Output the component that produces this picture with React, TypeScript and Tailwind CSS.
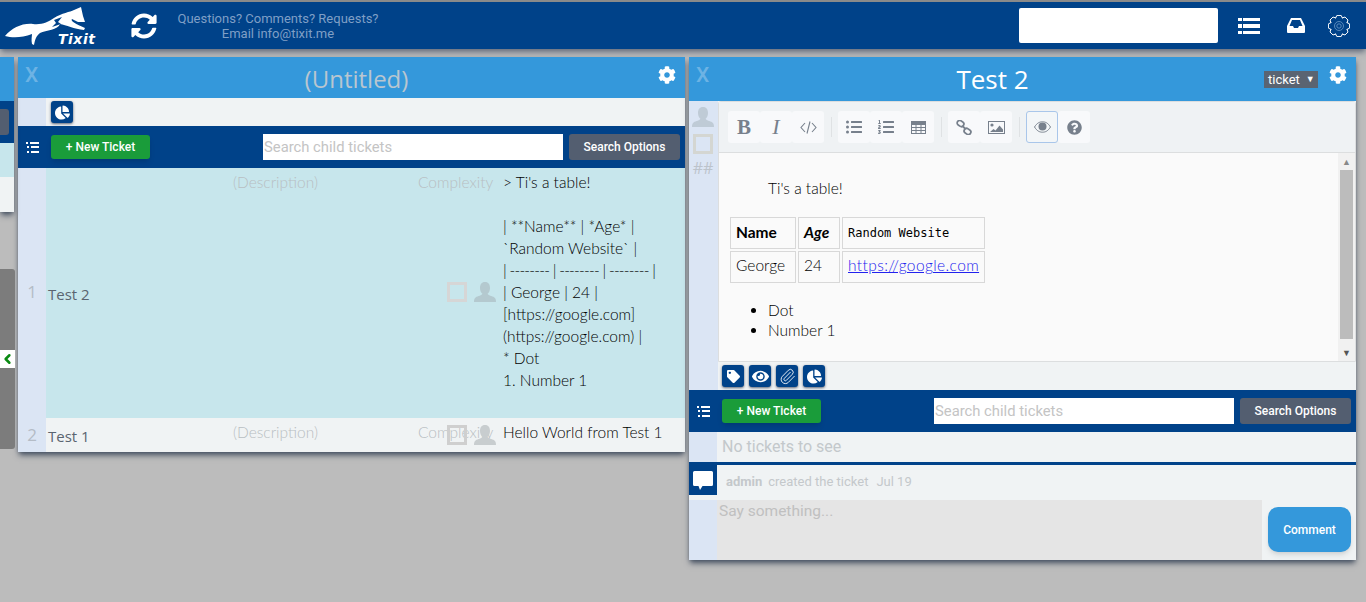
import { ChevronLeft, Paperclip } from "lucide-react";
import {
  FaListUl,
  FaListOl,
  FaEye,
  FaQuestionCircle,
  FaTag,
  FaChartPie,
  FaCog,
  FaSyncAlt,
} from "react-icons/fa";

const roboto = "font-['Roboto',sans-serif]";
const openSans = "font-['Open_Sans',sans-serif]";
const bodyFont = "font-['Lato',sans-serif] font-light";

function Logo() {
  return (
    <div className="relative w-[100px] h-[47px] shrink-0">
      <svg width="100" height="47" viewBox="0 2 100 47" className="absolute left-0 top-0">
        <path
          d="M5 36 C12 28 22 23 33 24 C42 25 48 22 54 18 C62 13 70 12 74 10 L81 7 L83 16 L85 22 L78 22 L72 19 C70 21 76 24 85 28 L84 30 C74 29 66 25 60 24 C58 30 46 30 40 33 C36 36 35 40 34 45 L32 44 C31 40 32 36 32 34 C22 38 12 38 5 36 Z"
          fill="#fff"
        />
        <path d="M54 20 L62 17 L58 22 L61 24 L52 27 L56 23 Z" fill="#004289" />
      </svg>
      <span className="absolute left-[58px] top-[30px] text-white text-[14px] leading-[15px] font-black italic tracking-[0.5px] font-['DejaVu_Sans',sans-serif]">
        Tixit
      </span>
    </div>
  );
}

function ListIcon() {
  return (
    <svg width="22" height="16" viewBox="0 0 22 16" fill="#fff" className="ml-[20px] shrink-0">
      <rect x="0" y="0" width="4" height="3" />
      <rect x="5" y="0" width="17" height="3" />
      <rect x="0" y="6" width="4" height="4" />
      <rect x="5" y="6" width="17" height="4" />
      <rect x="0" y="13" width="4" height="3" />
      <rect x="5" y="13" width="17" height="3" />
    </svg>
  );
}

function InboxIcon() {
  return (
    <svg width="18" height="15" viewBox="0 0 18 15" fill="#fff" className="ml-[27px] shrink-0">
      <path d="M4 0 H14 L18 8 V14 Q18 15 17 15 H1 Q0 15 0 14 V8 Z M5 2 L2.5 8 H6 L7 10 H11 L12 8 H15.5 L13 2 Z" fillRule="evenodd" />
    </svg>
  );
}

function OutlineGear() {
  const pts: string[] = [];
  for (let i = 0; i < 8; i++) {
    const a = (i * Math.PI) / 4;
    const step = Math.PI / 16;
    [
      [8.6, a - 2.1 * step],
      [10.8, a - step],
      [10.8, a + step],
      [8.6, a + 2.1 * step],
    ].forEach(([r, t]) => {
      pts.push(`${(11 + r * Math.cos(t)).toFixed(2)},${(11 + r * Math.sin(t)).toFixed(2)}`);
    });
  }
  return (
    <svg width="22" height="22" viewBox="0 0 22 22" fill="none" className="ml-[23px] mr-[16px] shrink-0">
      <polygon points={pts.join(" ")} stroke="#fff" strokeWidth="1" />
      <circle cx="11" cy="11" r="4.5" stroke="#6f9ac8" strokeWidth="0.8" />
      <circle cx="11" cy="11" r="2.2" stroke="#6f9ac8" strokeWidth="0.8" />
    </svg>
  );
}

function UserBust({ color }: { color: string }) {
  return (
    <svg width="22" height="20" viewBox="0 0 22 20" fill={color}>
      <path d="M11 0 C14.5 0 16 2.6 16 6 C16 8.6 15 10.6 13.6 11.8 C14 13.4 18 14 20.4 15.4 C21.6 16.2 22 17.4 22 20 H0 C0 17.4 0.4 16.2 1.6 15.4 C4 14 8 13.4 8.4 11.8 C7 10.6 6 8.6 6 6 C6 2.6 7.5 0 11 0 Z" />
    </svg>
  );
}

function ListToggle() {
  return (
    <div className="w-[28px] flex justify-center shrink-0">
      <svg width="13" height="11" viewBox="0 0 13 11" fill="#fff">
        <rect x="0" y="0" width="2" height="2" />
        <rect x="4" y="0" width="9" height="2" />
        <rect x="1" y="4" width="2" height="2" />
        <rect x="5" y="4" width="8" height="2" />
        <rect x="1" y="9" width="2" height="2" />
        <rect x="5" y="9" width="8" height="2" />
      </svg>
    </div>
  );
}

function TicketBar() {
  return (
    <div className={`flex items-center h-[42px] bg-[#004289] ${roboto}`}>
      <ListToggle />
      <button className="w-[99px] h-[24px] ml-[5px] rounded-[3px] bg-[#1a9c3a] text-white text-[12px] font-medium shadow-md">
        + New Ticket
      </button>
      <div className="flex-1" />
      <div className="w-[300px] h-[26px] bg-white text-[#c4c4c4] text-[14.8px] leading-[26px] pl-[1px] mr-[6px]">
        Search child tickets
      </div>
      <button className="w-[111px] h-[26px] mr-[5px] rounded-[3px] bg-[#535e70] text-white text-[12px] font-medium">
        Search Options
      </button>
    </div>
  );
}

function BlueBtn({ children }: { children: React.ReactNode }) {
  return (
    <div className="w-[22px] h-[22px] rounded-[3px] bg-[#004289] text-white flex items-center justify-center shadow-sm shadow-gray-500">
      {children}
    </div>
  );
}

function Checkbox({ color }: { color: string }) {
  return <div className={`w-[20px] h-[20px] border-[3px] ${color}`} />;
}

function ToolBtn({ children, active }: { children: React.ReactNode; active?: boolean }) {
  return (
    <div
      className={`w-[32px] h-[32px] rounded-[3px] flex items-center justify-center text-[#77808c] ${
        active ? "border border-[#a9c6ea] bg-[#f3f6f8]" : "bg-[#f8f9fb]"
      }`}
    >
      {children}
    </div>
  );
}

function Sep() {
  return <div className="w-px h-[20px] bg-[#dfe2e4] ml-[7px] mr-[6px] self-center" />;
}

function Row({
  num,
  name,
  tall,
  children,
  bg,
}: {
  num: string;
  name: string;
  tall?: boolean;
  children: React.ReactNode;
  bg: string;
}) {
  return (
    <div className={`flex ${bg} ${tall ? "h-[250px]" : "h-[34px]"}`}>
      <div className={`w-[28px] shrink-0 bg-[#dbe5f4] flex justify-center text-[#b4bcc6] text-[17px] ${openSans} ${tall ? "items-center pb-[2px]" : "pt-[4px]"}`}>
        {num}
      </div>
      <div className="relative flex-1">
        <span className={`absolute left-[2px] text-[#5a6470] text-[15px] font-medium ${openSans} ${tall ? "top-[115px]" : "top-[7px]"}`}>
          {name}
        </span>
        <span className={`absolute left-[187px] top-[3px] text-[#b8bec2] text-[15.5px] ${bodyFont}`}>(Description)</span>
        <span className={`absolute left-[372px] top-[3px] text-[#b8bec2] text-[15.5px] ${bodyFont}`}>Complexity</span>
        <div className={`absolute left-[401px] ${tall ? "top-[114px]" : "top-[7px]"}`}>
          <Checkbox color={tall ? "border-[#d6d6d6]" : "border-[#cfcfcf]"} />
        </div>
        <div className={`absolute left-[428px] ${tall ? "top-[114px]" : "top-[7px]"}`}>
          <UserBust color={tall ? "#b4c9cf" : "#c8cdcf"} />
        </div>
        <div className={`absolute left-[457px] top-[3px] whitespace-nowrap text-[15.5px] leading-[22px] text-black ${bodyFont}`}>
          {children}
        </div>
      </div>
    </div>
  );
}

export default function App() {
  return (
    <div className="w-[1366px] h-[602px] overflow-hidden bg-[#bcbcbc] flex flex-col">
      {/* top bar */}
      <div className={`h-[49px] shrink-0 bg-[#004289] border-t-2 border-[#8a8a8a] flex items-center shadow-md shadow-gray-500 ${roboto}`}>
        <Logo />
        <FaSyncAlt size={26} className="text-white ml-[31px] shrink-0" />
        <div className="w-[202px] ml-[20px] text-center text-[#7f9fc6] text-[13px] leading-[15px]">
          <div>Questions? Comments? Requests?</div>
          <div>Email info@tixit.me</div>
        </div>
        <div className="flex-1" />
        <div className="w-[199px] h-[35px] bg-white rounded-[2px]" />
        <ListIcon />
        <InboxIcon />
        <OutlineGear />
      </div>

      <div className="flex items-start mt-[8px]">
        {/* sliver of the previous card */}
        <div className="w-[14px] shrink-0 relative">
          <div className="shadow-md shadow-gray-600">
            <div className="h-[44px] bg-[#3498db]" />
            <div className="h-[42px] bg-[#004289] pt-[8px]">
              <div className="h-[26px] bg-[#535e70] rounded-r-[3px] w-[9px]" />
            </div>
            <div className="h-[34px] bg-[#c7e6ec]" />
            <div className="h-[35px] bg-[#f0f3f4]" />
          </div>
          <div className="h-[180px] w-[15px] mt-[57px] bg-[#7c7c7c] rounded-r-[3px] relative">
            <div className="absolute left-0 top-[81px] w-[15px] h-[18px] bg-white flex items-center justify-center">
              <ChevronLeft size={18} strokeWidth={4} className="text-[#0a8a12]" />
            </div>
          </div>
        </div>

        {/* left card */}
        <div className="w-[667px] ml-[4px] shrink-0 bg-[#f0f3f4] shadow-md shadow-gray-600 flex flex-col">
          <div className="relative h-[41px] bg-[#3498db] flex items-center justify-center pl-[10px] pt-[2px] shrink-0">
            <span className={`absolute left-[7px] top-[3px] text-[#6db3e4] text-[21px] font-medium ${roboto}`}>X</span>
            <span className={`text-[24px] text-[#b9c6d0] ${openSans}`}>(Untitled)</span>
            <FaCog size={18} className="absolute right-[9px] top-[9px] text-white" />
          </div>
          <div className="flex h-[28px] bg-[#f0f3f4]">
            <div className="w-[28px] bg-[#dbe5f4]" />
            <div className="ml-[5px] mt-[3px]">
              <BlueBtn>
                <FaChartPie size={15} />
              </BlueBtn>
            </div>
          </div>
          <TicketBar />
          <Row num="1" name="Test 2" tall bg="bg-[#c7e6ec]">
            <p>&gt; Ti's a table!</p>
            <p className="h-[22px]" />
            <p>| **Name** | *Age* |</p>
            <p>`Random Website` |</p>
            <p className="tracking-[-0.75px]">| -------- | -------- | -------- |</p>
            <p>| George | 24 |</p>
            <p>[https://google.com]</p>
            <p>(https://google.com) |</p>
            <p>* Dot</p>
            <p>1. Number 1</p>
          </Row>
          <Row num="2" name="Test 1" bg="bg-[#f0f3f4]">
            <p>Hello World from Test 1</p>
          </Row>
        </div>

        {/* right card */}
        <div className="w-[667px] ml-[4px] shrink-0 bg-[#f0f3f4] shadow-md shadow-gray-600 flex flex-col">
          <div className="relative h-[44px] bg-[#3498db] flex items-center justify-center pr-[60px] shrink-0">
            <span className={`absolute left-[7px] top-[3px] text-[#6db3e4] text-[21px] font-medium ${roboto}`}>X</span>
            <span className={`text-[26px] text-white ${openSans}`}>Test 2</span>
            <span className={`absolute right-[38px] top-[14px] w-[54px] h-[17px] bg-[#5a6472] text-white text-[13px] leading-[16px] pl-[4px] ${roboto}`}>
              ticket
              <span className="text-[9px] align-[2px] ml-[6px]">▼</span>
            </span>
            <FaCog size={18} className="absolute right-[9px] top-[9px] text-white" />
          </div>
          <div className="flex">
            <div className="w-[29px] shrink-0 bg-[#dbe5f4] flex flex-col items-center pr-[1px] pt-[6px]">
              <UserBust color="#bfcbd6" />
              <div className="mt-[7px]">
                <Checkbox color="border-[#d4d6d2]" />
              </div>
              <span className={`text-[16px] leading-[20px] mt-[4px] text-[#bcc3cb] ${openSans}`}>##</span>
            </div>
            <div className="flex-1 min-w-0">
              <div className="border border-[#dcdedf] rounded-t-[3px]">
                <div className="flex items-center h-[51px] pl-[9px] bg-[#eff2f4] border-b border-[#dcdedf]">
                  <div className="flex">
                    <ToolBtn><span className="font-['Liberation_Serif',serif] font-bold text-[21px] leading-none">B</span></ToolBtn>
                    <ToolBtn><span className="font-['Liberation_Serif',serif] italic text-[22px] leading-none">I</span></ToolBtn>
                    <ToolBtn>
                      <svg width="17" height="13" viewBox="0 0 17 13" fill="none" stroke="currentColor" strokeWidth="1.1">
                        <path d="M5 2 L1 6.5 L5 11 M12 2 L16 6.5 L12 11 M10 0.5 L7 12.5" />
                      </svg>
                    </ToolBtn>
                  </div>
                  <Sep />
                  <div className="flex">
                    <ToolBtn><FaListUl size={16} /></ToolBtn>
                    <ToolBtn><FaListOl size={16} /></ToolBtn>
                    <ToolBtn>
                      <svg width="15" height="13" viewBox="0 0 15 13" fill="none" stroke="currentColor" strokeWidth="1">
                        <rect x="0.5" y="0.5" width="14" height="12" />
                        <path d="M0.5 3.5 H14.5 M0.5 6.5 H14.5 M0.5 9.5 H14.5 M5 3.5 V12.5 M10 3.5 V12.5" />
                        <rect x="0.5" y="0.5" width="14" height="3" fill="currentColor" />
                      </svg>
                    </ToolBtn>
                  </div>
                  <Sep />
                  <div className="flex">
                    <ToolBtn>
                      <svg width="16" height="15" viewBox="0 0 16 15" fill="none" stroke="currentColor" strokeWidth="1.8">
                        <rect x="1" y="1" width="7" height="5" rx="2.5" transform="rotate(35 4.5 3.5)" />
                        <rect x="8" y="9" width="7" height="5" rx="2.5" transform="rotate(35 11.5 11.5)" />
                        <path d="M6.5 6 L9.5 9" />
                      </svg>
                    </ToolBtn>
                    <ToolBtn>
                      <svg width="17" height="13" viewBox="0 0 17 13" fill="currentColor">
                        <path d="M0 0 H17 V13 H0 Z M1 1 V12 H16 V1 Z" fillRule="evenodd" />
                        <circle cx="4" cy="4" r="1.6" />
                        <path d="M2 11 L5.5 8 L7.5 9.5 L11.5 4.5 L15 8.5 V11 Z" />
                      </svg>
                    </ToolBtn>
                  </div>
                  <Sep />
                  <div className="flex">
                    <ToolBtn active>
                      <svg width="17" height="12" viewBox="0 0 17 12">
                        <path d="M0.5 6 C3 2 5.5 0.8 8.5 0.8 C11.5 0.8 14 2 16.5 6 C14 10 11.5 11.2 8.5 11.2 C5.5 11.2 3 10 0.5 6 Z" fill="none" stroke="currentColor" strokeWidth="1" />
                        <circle cx="8.5" cy="5.5" r="4" fill="currentColor" />
                      </svg>
                    </ToolBtn>
                    <ToolBtn><FaQuestionCircle size={15} /></ToolBtn>
                  </div>
                </div>
                <div className="flex h-[208px] bg-[#fafafa]">
                  <div className={`flex-1 pl-[11px] pt-[25px] text-black text-[15.5px] ${bodyFont}`}>
                    <p className="ml-[38px] leading-[20px]">Ti's a table!</p>
                    <table className="mt-[17px] table-fixed border-separate border-spacing-[2px] -ml-[2px] text-[15.5px]">
                      <tbody>
                        <tr>
                          <th className="border border-[#d8d8d8] w-[66px] h-[32px] px-[5px] text-left font-bold">Name</th>
                          <th className="border border-[#d8d8d8] w-[42px] px-[5px] text-left font-bold italic">Age</th>
                          <th className="border border-[#d8d8d8] w-[143px] px-[5px] text-left font-normal font-['DejaVu_Sans_Mono',monospace] text-[12px] text-black">
                            Random Website
                          </th>
                        </tr>
                        <tr>
                          <td className="border border-[#d8d8d8] h-[32px] px-[5px] pb-[2px]">George</td>
                          <td className="border border-[#d8d8d8] px-[5px] pb-[2px]">24</td>
                          <td className="border border-[#d8d8d8] px-[5px] pb-[2px] text-[#2222ee] underline whitespace-nowrap tracking-[0.4px]">https://google.com</td>
                        </tr>
                      </tbody>
                    </table>
                    <ul className="list-disc ml-[38px] mt-[15px] leading-[20px]">
                      <li>Dot</li>
                      <li>Number 1</li>
                    </ul>
                  </div>
                  <div className="w-[17px] shrink-0 bg-[#f1f1f1] flex flex-col items-center">
                    <span className="text-[9px] text-[#888] leading-[17px] h-[17px]">▲</span>
                    <div className="w-[13px] h-[169px] bg-[#bcbcbc]" />
                    <span className="text-[9px] text-[#555] leading-[17px] h-[17px] mt-auto">▼</span>
                  </div>
                </div>
              </div>
              <div className="flex gap-[5px] h-[28px] pl-[4px] pt-[3px]">
                <BlueBtn><FaTag size={13} /></BlueBtn>
                <BlueBtn><FaEye size={17} /></BlueBtn>
                <BlueBtn><Paperclip size={17} strokeWidth={1.25} /></BlueBtn>
                <BlueBtn><FaChartPie size={15} /></BlueBtn>
              </div>
            </div>
          </div>
          <TicketBar />
          <div className="flex h-[30px]">
            <div className="w-[28px] bg-[#dbe5f4]" />
            <span className={`pl-[5px] pt-[3px] text-[#c3c8cb] text-[16px] ${roboto}`}>No tickets to see</span>
          </div>
          <div className="h-[3px] bg-[#004289]" />
          <div className="flex h-[35px]">
            <div className="w-[28px] h-[30px] bg-[#004289] flex items-center justify-center">
              <svg width="20" height="19" viewBox="0 0 20 19" fill="#fff">
                <path d="M1.5 0 H18.5 Q20 0 20 1.5 V13.5 Q20 15 18.5 15 H9.5 L7 19 L5.5 15 H1.5 Q0 15 0 13.5 V1.5 Q0 0 1.5 0 Z" />
              </svg>
            </div>
            <div className={`pl-[9px] pt-[7px] text-[13px] text-[#c4c8cb] ${roboto}`}>
              <span className="font-bold">admin</span>
              <span className="ml-[6px]">created the ticket</span>
              <span className="ml-[8px]">Jul 19</span>
            </div>
          </div>
          <div className="flex h-[60px]">
            <div className="w-[28px] bg-[#dbe5f4]" />
            <div className={`w-[545px] bg-[#e5e5e5] text-[#c0c0c0] text-[15.5px] pl-[2px] ${roboto}`}>Say something...</div>
            <button className={`w-[83px] h-[45px] mt-[7px] ml-[6px] rounded-[10px] bg-[#3498db] text-white text-[12px] font-medium shadow-md ${roboto}`}>
              Comment
            </button>
          </div>
        </div>
      </div>
    </div>
  );
}
